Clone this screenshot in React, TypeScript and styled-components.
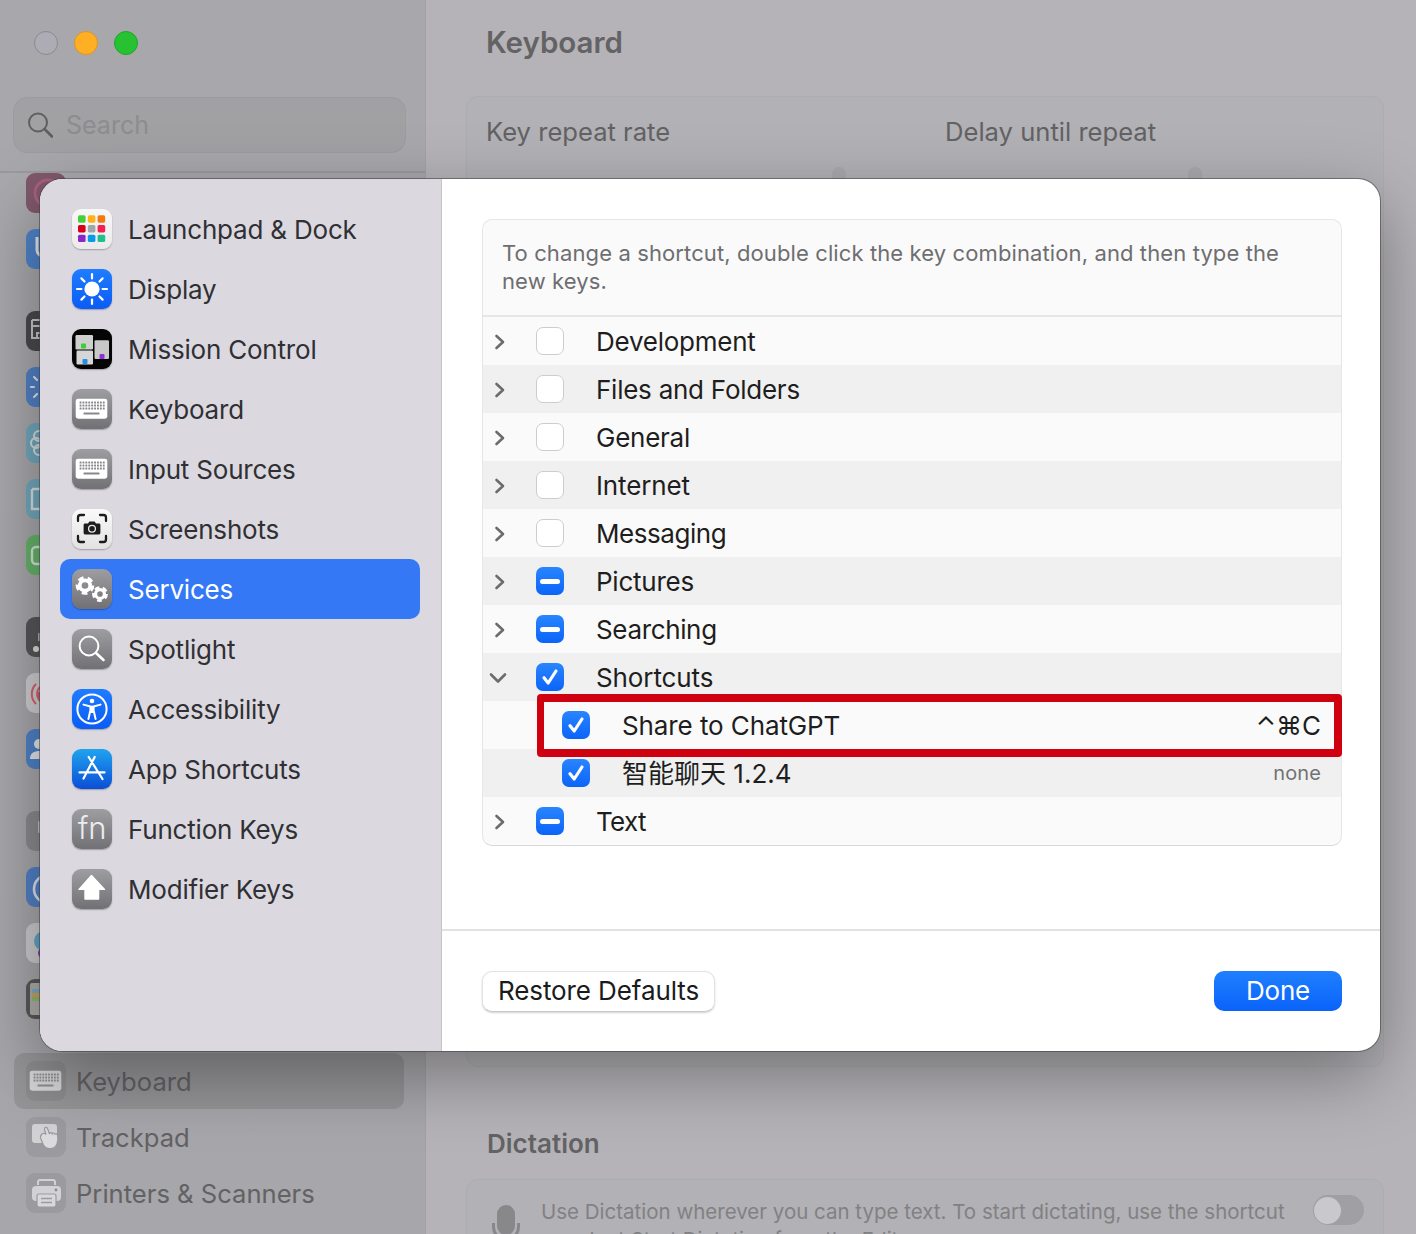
import React from "react";
import styled, { createGlobalStyle } from "styled-components";

const Global = createGlobalStyle`
  html, body { margin: 0; padding: 0; background: #b3b2b6; }
  *, *::before, *::after { box-sizing: border-box; }
  body { font-family: Inter, "Noto Sans CJK SC", "DejaVu Sans", sans-serif; }
`;

const Page = styled.div`
  position: relative;
  display: flex;
  width: 1416px;
  height: 1234px;
  overflow: hidden;
`;

/* ---------- window behind the sheet ---------- */
const BackSidebar = styled.aside`
  width: 426px;
  flex: none;
  display: flex;
  flex-direction: column;
  background: linear-gradient(180deg, #a9a8ac 0%, #a7a6aa 100%);
  border-right: 1px solid #a2a1a5;
`;
const BackHeader = styled.div`
  height: 173px;
  flex: none;
  padding: 31px 20px 0 13px;
  border-bottom: 2px solid #9a999d;
  background: #a8a7ab;
`;
const Lights = styled.div`
  display: flex;
  gap: 16px;
  padding-left: 21px;
`;
const Light = styled.span<{ $c: string; $b: string }>`
  width: 24px;
  height: 24px;
  border-radius: 50%;
  background: ${(p) => p.$c};
  border: 1px solid ${(p) => p.$b};
`;
const SearchField = styled.div`
  margin-top: 42px;
  width: 393px;
  height: 56px;
  display: flex;
  align-items: center;
  gap: 13px;
  padding-left: 13px;
  border-radius: 14px;
  background: #a1a0a3;
  border: 1px solid #9c9b9f;
  font-size: 25px;
  color: #8d8c8f;
`;
const BackList = styled.div`
  display: flex;
  flex-direction: column;
  margin-top: -8px;
  padding: 0 21px 0 14px;
`;
const BackRow = styled.div<{ $gap?: boolean; $selected?: boolean }>`
  height: 56px;
  flex: none;
  display: flex;
  align-items: center;
  gap: 10px;
  padding-left: 12px;
  margin-top: ${(p) => (p.$gap ? "26px" : "0")};
  border-radius: 10px;
  font-size: 25.6px;
  color: #626264;
  background: ${(p) => (p.$selected ? "rgba(70,70,74,.18)" : "transparent")};
`;
const BackTile = styled.div<{ $bg: string }>`
  width: 40px;
  height: 40px;
  flex: none;
  border-radius: 9px;
  background: ${(p) => p.$bg};
  display: flex;
  overflow: hidden;
`;
const BackMain = styled.main`
  flex: 1;
  min-width: 0;
  display: flex;
  flex-direction: column;
  padding: 0 32px 0 40px;
  background: #b5b3b7;
`;
const BackTitle = styled.h1`
  margin: 0;
  height: 96px;
  flex: none;
  padding: 24px 0 0 20px;
  font-size: 29.5px;
  line-height: 36px;
  font-weight: 600;
  color: #636365;
`;
const BackCard = styled.section<{ $h: number }>`
  height: ${(p) => p.$h}px;
  flex: none;
  border: 1px solid #adacb0;
  border-radius: 12px;
  background: #b2b1b5;
  display: flex;
  position: relative;
`;
const RepeatLabel = styled.div<{ $w: number }>`
  width: ${(p) => p.$w}px;
  padding: 19px 0 0 19px;
  font-size: 25.6px;
  line-height: 32px;
  color: #626264;
`;
const Thumb = styled.span<{ $x: number }>`
  position: absolute;
  left: ${(p) => p.$x}px;
  top: 70px;
  width: 14px;
  height: 30px;
  border-radius: 7px;
  background: #a9a8ac;
`;
const SectionTitle = styled.h2`
  margin: 0;
  height: 112px;
  flex: none;
  padding: 60px 0 0 21px;
  font-size: 26px;
  line-height: 34px;
  font-weight: 600;
  color: #636365;
`;
const DictationBody = styled.div`
  display: flex;
  flex: 1;
  min-width: 0;
  align-items: flex-start;
  padding: 15px 19px 0 25px;
`;
const MicSlot = styled.div`
  flex: none;
  margin-top: 10px;
`;
const DictationText = styled.p`
  margin: 3px 20px 0 21px;
  flex: 1;
  min-width: 0;
  font-size: 20.5px;
  line-height: 28px;
  color: #818184;
  white-space: nowrap;
`;
const Toggle = styled.span`
  width: 51px;
  height: 30px;
  flex: none;
  border-radius: 15px;
  background: #a09fa3;
  display: flex;
  align-items: center;
  padding-left: 1px;
  &::before {
    content: "";
    width: 27px;
    height: 27px;
    border-radius: 50%;
    background: #c9c8cb;
  }
`;

/* ---------- sheet ---------- */
const Sheet = styled.div`
  position: absolute;
  left: 40px;
  top: 179px;
  width: 1340px;
  height: 872px;
  display: flex;
  border-radius: 22px;
  overflow: hidden;
  background: #fff;
  box-shadow: 0 0 0 1px rgba(60, 60, 64, 0.55), 0 24px 70px rgba(0, 0, 0, 0.36);
`;
const SheetNav = styled.nav`
  width: 402px;
  flex: none;
  display: flex;
  flex-direction: column;
  padding: 20px 21px 0 20px;
  background: #dbd9df;
  border-right: 1px solid #c6c5ca;
`;
const NavItem = styled.div<{ $active?: boolean }>`
  height: 60px;
  flex: none;
  display: flex;
  align-items: center;
  gap: 16px;
  padding-left: 12px;
  border-radius: 10px;
  font-size: 26px;
  letter-spacing: -0.2px;
  color: ${(p) => (p.$active ? "#fff" : "#303034")};
  background: ${(p) => (p.$active ? "#3478f6" : "transparent")};
`;
const Tile = styled.div<{ $bg: string }>`
  width: 40px;
  height: 40px;
  flex: none;
  border-radius: 9px;
  background: ${(p) => p.$bg};
  box-shadow: 0 1px 1.5px rgba(0, 0, 0, 0.28);
  display: flex;
  align-items: center;
  justify-content: center;
  overflow: hidden;
`;
const FnGlyph = styled.span`
  font-size: 31px;
  font-weight: 300;
  line-height: 40px;
  color: #ececee;
  margin-top: -2px;
`;
const SheetMain = styled.div`
  flex: 1;
  min-width: 0;
  display: flex;
  flex-direction: column;
`;
const PanelArea = styled.div`
  height: 752px;
  flex: none;
  padding: 40px 38px 0 40px;
  border-bottom: 2px solid #e2e2e2;
`;
const Panel = styled.div`
  height: 627px;
  border: 1px solid #e6e6e6;
  border-bottom-color: #d9d9d9;
  border-radius: 10px;
  background: #fafafa;
`;
const PanelNote = styled.p`
  margin: 0;
  height: 97px;
  padding: 19px 19px 0 19px;
  font-size: 22px;
  line-height: 28px;
  letter-spacing: 0.11px;
  color: #6e6e70;
  border-bottom: 2px solid #e6e6e6;
`;
const Rows = styled.div`
  display: flex;
  flex-direction: column;
`;
const Row = styled.div<{ $outlined?: boolean }>`
  position: relative;
  z-index: ${(p) => (p.$outlined ? 1 : 0)};
  height: 48px;
  flex: none;
  display: flex;
  align-items: center;
  padding-right: 20px;
  font-size: 26px;
  color: #1e1e20;
  &:nth-child(even) {
    background: #f0f0f0;
  }
  &:last-child {
    border-radius: 0 0 9px 9px;
  }
  ${(p) =>
    p.$outlined
      ? `&::after {
          content: "";
          position: absolute;
          left: 54px;
          right: -1px;
          top: -7px;
          height: 63px;
          border: 8px solid #cf0010;
          border-left-width: 7px;
          border-radius: 4px;
          pointer-events: none;
        }`
      : ""}
`;
const ChevronSlot = styled.div<{ $child?: boolean }>`
  width: ${(p) => (p.$child ? "79px" : "53px")};
  flex: none;
  display: flex;
  padding: 2px 0 0 11px;
`;
const Box = styled.span<{ $state: "off" | "mixed" | "on" }>`
  width: 28px;
  height: 28px;
  flex: none;
  display: flex;
  align-items: center;
  justify-content: center;
  border-radius: 7px;
  background: ${(p) =>
    p.$state === "off" ? "#fff" : "linear-gradient(180deg, #2a85ff, #0b64f9)"};
  border: ${(p) => (p.$state === "off" ? "1px solid #cdcdcd" : "none")};
`;
const MixedBar = styled.span`
  width: 20px;
  height: 5px;
  border-radius: 2.5px;
  background: #fff;
`;
const RowLabel = styled.span<{ $ls: number }>`
  margin-left: 32px;
  padding-top: 2px;
  line-height: 32px;
  letter-spacing: ${(p) => p.$ls}px;
`;
const Shortcut = styled.span<{ $muted?: boolean }>`
  margin-left: auto;
  font-size: ${(p) => (p.$muted ? "20px" : "26px")};
  letter-spacing: ${(p) => (p.$muted ? "0.1px" : "0")};
  color: ${(p) => (p.$muted ? "#727274" : "#1e1e20")};
`;
const Footer = styled.div`
  flex: 1;
  display: flex;
  align-items: center;
  justify-content: space-between;
  padding: 0 38px 0 40px;
`;
const RestoreButton = styled.button`
  height: 41px;
  width: 233px;
  padding: 0 0 2px;
  border: 1px solid #e3e3e3;
  border-bottom-color: #c9c9c9;
  border-radius: 10px;
  background: #fff;
  box-shadow: 0 1px 2px rgba(0, 0, 0, 0.18);
  font: inherit;
  font-size: 26px;
  letter-spacing: -0.1px;
  color: #1b1b1d;
`;
const DoneButton = styled.button`
  height: 40px;
  width: 128px;
  padding: 0 0 2px;
  border: none;
  border-radius: 10px;
  background: linear-gradient(180deg, #1f7fff, #0a63fa);
  font: inherit;
  font-size: 26px;
  letter-spacing: -0.25px;
  color: #fff;
`;

/* ---------- icons ---------- */
const Svg: React.FC<{ children: React.ReactNode }> = ({ children }) => (
  <svg width={40} height={40} viewBox="0 0 40 40" fill="none">
    {children}
  </svg>
);

const LaunchIcon = () => {
  const c = ["#45cf3a", "#ffb21a", "#f5780f", "#d9001b", "#9fa8a8", "#f5204f", "#8d26c9", "#0a9ae8", "#1fbf8f"];
  return (
    <Svg>
      {c.map((f, i) => (
        <rect key={f} x={6 + (i % 3) * 9.8} y={6.3 + Math.floor(i / 3) * 9.7} width="7.6" height="7.4" rx="1.6" fill={f} />
      ))}
    </Svg>
  );
};

const SunIcon = () => (
  <Svg>
    <circle cx="20" cy="20" r="7.6" fill="#fff" />
    {[0, 45, 90, 135, 180, 225, 270, 315].map((a) => (
      <line key={a} x1="20" y1="5" x2="20" y2="9.4" stroke="#fff" strokeWidth="2.2" strokeLinecap="round" transform={`rotate(${a} 20 20)`} />
    ))}
  </Svg>
);

const MissionIcon = () => (
  <Svg>
    <rect x="3.5" y="6" width="17.5" height="14.5" rx="1.2" fill="#cfcfcf" />
    <rect x="4.5" y="21.5" width="16.5" height="14" rx="1.2" fill="#d6d6d6" />
    <rect x="22.5" y="11.3" width="14.5" height="18.7" rx="1.2" fill="#c8c8c8" />
    <rect x="9" y="14.5" width="5" height="5" rx="1" fill="#3ccf3a" />
    <rect x="10.5" y="30" width="5" height="5" rx="1" fill="#1e90f0" />
    <rect x="27.5" y="25" width="5" height="5" rx="1" fill="#9030d8" />
  </Svg>
);

const KeyboardIcon: React.FC<{ dot?: string; body?: string }> = ({ dot = "#88888c", body = "#fff" }) => {
  const dots: React.ReactNode[] = [];
  for (let r = 0; r < 3; r++) {
    for (let c = 0; c < 9; c++) {
      dots.push(<rect key={`${r}-${c}`} x={7.6 + c * 2.9} y={12.6 + r * 3} width="1.9" height="2" rx=".3" fill={dot} />);
    }
  }
  return (
    <Svg>
      <rect x="3.7" y="9.7" width="31.6" height="20" rx="2.4" fill={body} />
      {dots}
      <rect x="11.5" y="23.6" width="16" height="2" rx=".6" fill={dot} />
    </Svg>
  );
};

const ScreenshotIcon = () => (
  <Svg>
    <path d="M6 12V8.5A2.5 2.5 0 0 1 8.5 6H12M28 6h3.5A2.5 2.5 0 0 1 34 8.5V12M34 27v3.5a2.5 2.5 0 0 1-2.5 2.5H28M12 33H8.5A2.5 2.5 0 0 1 6 30.5V27" stroke="#1c1c1e" strokeWidth="2.3" strokeLinecap="round" />
    <path d="M13 14.5h3l1.4-2h5.2l1.4 2h3a1.4 1.4 0 0 1 1.4 1.4v8.2a1.4 1.4 0 0 1-1.4 1.4H13a1.4 1.4 0 0 1-1.4-1.4v-8.2a1.4 1.4 0 0 1 1.4-1.4z" fill="#1c1c1e" />
    <circle cx="20" cy="19.8" r="3.4" fill="none" stroke="#e8e8e8" strokeWidth="1.3" />
  </Svg>
);

const Gear: React.FC<{ x: number; y: number; r: number }> = ({ x, y, r }) => (
  <g>
    <circle cx={x} cy={y} r={r * 0.58} stroke="#fff" strokeWidth={r * 0.42} fill="none" />
    <circle cx={x} cy={y} r={r * 0.86} stroke="#fff" strokeWidth={r * 0.36} fill="none" strokeDasharray={`${r * 0.62} ${r * 0.46}`} />
  </g>
);

const ServicesIcon = () => (
  <Svg>
    <Gear x={13} y={16.5} r={9} />
    <Gear x={28} y={25} r={7.6} />
  </Svg>
);

const SpotlightIcon = () => (
  <Svg>
    <circle cx="17" cy="17" r="9.4" stroke="#fff" strokeWidth="2" />
    <line x1="24" y1="24" x2="31.5" y2="31" stroke="#fff" strokeWidth="2.6" strokeLinecap="round" />
  </Svg>
);

const AccessIcon = () => (
  <Svg>
    <circle cx="20" cy="20" r="14.6" stroke="#fff" strokeWidth="2" />
    <circle cx="20" cy="12" r="2.3" fill="#fff" />
    <rect x="17.4" y="16.6" width="5.2" height="7.4" fill="#fff" />
    <path d="M11.5 15.6 17.5 17.3M28.5 15.6 22.5 17.3M18 23l-1.6 7M22 23l1.6 7" stroke="#fff" strokeWidth="2" strokeLinecap="round" />
  </Svg>
);

const AppIcon = () => (
  <Svg>
    <path d="M16.7 8 30.5 30M22.7 8 11.5 29.5M7.5 23.4h25" stroke="#fff" strokeWidth="2.2" strokeLinecap="round" />
  </Svg>
);

const ArrowIcon = () => (
  <Svg>
    <path d="M19.5 6.5 32.5 20.4H26.6V30H13V20.4H7z" fill="#fff" stroke="#fff" strokeWidth="1.4" strokeLinejoin="round" />
  </Svg>
);

const GREY = "linear-gradient(180deg, #9e9ea2, #717175)";

const navItems: { label: string; bg: string; icon: React.ReactNode; active?: boolean }[] = [
  { label: "Launchpad & Dock", bg: "linear-gradient(180deg,#f7f7f7,#ebebeb)", icon: <LaunchIcon /> },
  { label: "Display", bg: "linear-gradient(180deg,#1f7cff,#0a5cf5)", icon: <SunIcon /> },
  { label: "Mission Control", bg: "#050505", icon: <MissionIcon /> },
  { label: "Keyboard", bg: GREY, icon: <KeyboardIcon /> },
  { label: "Input Sources", bg: GREY, icon: <KeyboardIcon /> },
  { label: "Screenshots", bg: "linear-gradient(180deg,#fafafa,#e2e2e2)", icon: <ScreenshotIcon /> },
  { label: "Services", bg: GREY, icon: <ServicesIcon />, active: true },
  { label: "Spotlight", bg: GREY, icon: <SpotlightIcon /> },
  { label: "Accessibility", bg: "linear-gradient(180deg,#1f7cff,#0a5cf5)", icon: <AccessIcon /> },
  { label: "App Shortcuts", bg: "linear-gradient(180deg,#1fa3ef,#0b4ed6)", icon: <AppIcon /> },
  { label: "Function Keys", bg: GREY, icon: <FnGlyph>fn</FnGlyph> },
  { label: "Modifier Keys", bg: GREY, icon: <ArrowIcon /> },
];

const Chevron: React.FC<{ open?: boolean }> = ({ open }) =>
  open ? (
    <svg width="18" height="12" viewBox="0 0 18 12" fill="none" style={{ marginLeft: -5 }}>
      <path d="M2 2.5 9 9.5 16 2.5" stroke="#6c6c6e" strokeWidth="2.6" strokeLinecap="round" strokeLinejoin="round" />
    </svg>
  ) : (
    <svg width="12" height="16" viewBox="0 0 12 16" fill="none">
      <path d="M2.5 2 9 8 2.5 14" stroke="#6c6c6e" strokeWidth="2.6" strokeLinecap="round" strokeLinejoin="round" />
    </svg>
  );

const Check: React.FC<{ state: "off" | "mixed" | "on" }> = ({ state }) => (
  <Box $state={state}>
    {state === "mixed" && <MixedBar />}
    {state === "on" && (
      <svg width="20" height="20" viewBox="0 0 20 20" fill="none">
        <path d="M4 10.8 8.2 16 16 4" stroke="#fff" strokeWidth="3.2" strokeLinecap="round" strokeLinejoin="round" />
      </svg>
    )}
  </Box>
);

type RowData = {
  label: string;
  state: "off" | "mixed" | "on";
  ls: number;
  open?: boolean;
  child?: boolean;
  outlined?: boolean;
  keys?: string;
  muted?: boolean;
};

const rows: RowData[] = [
  { label: "Development", state: "off", ls: -0.25 },
  { label: "Files and Folders", state: "off", ls: -0.25 },
  { label: "General", state: "off", ls: -0.25 },
  { label: "Internet", state: "off", ls: -0.15 },
  { label: "Messaging", state: "off", ls: -0.45 },
  { label: "Pictures", state: "mixed", ls: -0.25 },
  { label: "Searching", state: "mixed", ls: -0.35 },
  { label: "Shortcuts", state: "on", ls: -0.1, open: true },
  { label: "Share to ChatGPT", state: "on", ls: -0.1, child: true, outlined: true, keys: "⌃⌘C" },
  { label: "智能聊天 1.2.4", state: "on", ls: 0, child: true, keys: "none", muted: true },
  { label: "Text", state: "mixed", ls: -0.7 },
];

const g = (d: React.ReactNode) => <Svg>{d}</Svg>;

const backIcons: { bg: string; gap?: boolean; art?: React.ReactNode }[] = [
  { bg: "#80586c", art: g(<circle cx="22" cy="20" r="13" stroke="#a8607f" strokeWidth="3" />) },
  { bg: "#4f83c8", art: g(<path d="M11 8v13a6 6 0 0 0 6 6" stroke="#e3e3e6" strokeWidth="3" />) },
  { bg: "#4a4a4c", gap: true, art: g(<path d="M6 9h16M6 15h16M6 9v18h14M11 22h4v5h-4z" stroke="#c5c5c7" strokeWidth="2" />) },
  { bg: "#5180c6", art: g(<path d="M5 20h3M8 10l3 3M8 30l3-3" stroke="#dfe2e8" strokeWidth="2.2" strokeLinecap="round" />) },
  { bg: "#71a8bd", art: g(<g stroke="#d5dde0" strokeWidth="2"><circle cx="13" cy="13" r="5" /><circle cx="10" cy="20" r="5" /><circle cx="13" cy="27" r="5" /></g>) },
  { bg: "#71a8bd", art: g(<path d="M6 10h16M6 10v20h16" stroke="#d5dde0" strokeWidth="2.4" />) },
  { bg: "#66b36b", art: g(<rect x="6" y="12" width="24" height="17" rx="4" stroke="#d4e4d4" strokeWidth="2.4" />) },
  { bg: "#575759", gap: true, art: g(<><circle cx="10" cy="32" r="3" fill="#dcdcdd" /><rect x="12" y="16" width="8" height="8" fill="#b0b0b2" /></>) },
  { bg: "#cfcfd1", art: g(<path d="M14 14a10 10 0 0 0 0 14M10 11a14 14 0 0 0 0 20M13 19v6" stroke="#d8616f" strokeWidth="2" />) },
  { bg: "#4f83c8", art: g(<><circle cx="13" cy="15" r="5" fill="#e3e6ea" /><path d="M4 30c0-6 4-8 10-8v8z" fill="#e3e6ea" /></>) },
  { bg: "#8b8b8d", gap: true, art: g(<rect x="12" y="10" width="6" height="12" rx="1" fill="#c4c4c5" />) },
  { bg: "#5180c6", art: g(<circle cx="22" cy="22" r="14" stroke="#dce1e8" strokeWidth="2.6" />) },
  { bg: "#cbcbcd", art: g(<><circle cx="18" cy="18" r="10" fill="#62a3c6" /><circle cx="18" cy="30" r="6" fill="#7c3ac4" /></>) },
  { bg: "#59595b", art: g(<><rect x="4" y="4" width="34" height="32" rx="2" fill="#aeada8" /><rect x="6" y="10" width="20" height="4" fill="#7ba9c9" /><rect x="6" y="14" width="20" height="4" fill="#c9a35a" /><rect x="6" y="18" width="20" height="4" fill="#8fb56f" /></>) },
];

const TrackpadArt = () => (
  <Svg>
    <rect x="6" y="7" width="25" height="19" rx="3" fill="#d2d2d4" />
    <path d="M16 17c1.4-1.4 3-.5 4 .5l-1.5-5c-.5-2 2-3 3-1l2 5.5c0-1.5 2.2-2 2.8-.2.5-1.2 2.3-1 2.7.4.8-.8 2.2-.3 2.5 1 .8 3 .5 6-.5 8.5-1.2 3-3.5 5-7 5-3 0-5-1.2-6.5-3.5L15 22c-.8-1.5-.5-3.5 1-5z" fill="#dcdcde" stroke="#9b9a9e" strokeWidth="1.2" />
  </Svg>
);

const PrinterArt = () => (
  <Svg>
    <path d="M12 12V8.5A2 2 0 0 1 14 7h13a2 2 0 0 1 2 1.5V12" stroke="#d2d2d4" strokeWidth="2" />
    <rect x="6" y="13" width="29" height="15" rx="4" fill="#d2d2d4" />
    <circle cx="30" cy="17" r="1.4" fill="#8a8a8c" />
    <rect x="11" y="21" width="19" height="13" rx="2" fill="#d8d8da" stroke="#9b9a9e" strokeWidth="1.2" />
    <path d="M15 25.5h11M15 29.5h11" stroke="#9b9a9e" strokeWidth="1.4" />
  </Svg>
);

const SearchGlyph = () => (
  <svg width="26" height="28" viewBox="0 0 26 28" fill="none">
    <circle cx="11" cy="11.5" r="9" stroke="#5f5f61" strokeWidth="2" />
    <line x1="17.5" y1="18" x2="25" y2="25.5" stroke="#5f5f61" strokeWidth="2.6" strokeLinecap="round" />
  </svg>
);

const MicGlyph = () => (
  <svg width="28" height="40" viewBox="0 0 28 40" fill="none">
    <rect x="5" y="0" width="18" height="30" rx="9" fill="#88888a" />
    <path d="M1.5 18v4c0 7 5.5 12 12.5 12s12.5-5 12.5-12v-4M14 34v6" stroke="#88888a" strokeWidth="3" />
  </svg>
);

export default function App() {
  return (
    <Page>
      <Global />
      <BackSidebar>
        <BackHeader>
          <Lights>
            <Light $c="#adacb5" $b="#8a8990" />
            <Light $c="#ffaf24" $b="#dc9620" />
            <Light $c="#27c231" $b="#1fa52a" />
          </Lights>
          <SearchField>
            <SearchGlyph />
            Search
          </SearchField>
        </BackHeader>
        <BackList>
          {backIcons.map((b, i) => (
            <BackRow key={i} $gap={b.gap}>
              <BackTile $bg={b.bg}>{b.art}</BackTile>
            </BackRow>
          ))}
          <BackRow $gap $selected>
            <BackTile $bg="#8c8b8e">
              <KeyboardIcon dot="#8d8c90" body="#d5d5d7" />
            </BackTile>
            Keyboard
          </BackRow>
          <BackRow>
            <BackTile $bg="#9b9a9e">
              <TrackpadArt />
            </BackTile>
            Trackpad
          </BackRow>
          <BackRow>
            <BackTile $bg="#9b9a9e">
              <PrinterArt />
            </BackTile>
            Printers &amp; Scanners
          </BackRow>
        </BackList>
      </BackSidebar>
      <BackMain>
        <BackTitle>Keyboard</BackTitle>
        <BackCard $h={971}>
          <RepeatLabel $w={459}>Key repeat rate</RepeatLabel>
          <RepeatLabel $w={400}>Delay until repeat</RepeatLabel>
          <Thumb $x={365} />
          <Thumb $x={721} />
        </BackCard>
        <SectionTitle>Dictation</SectionTitle>
        <BackCard $h={120}>
          <DictationBody>
            <MicSlot>
              <MicGlyph />
            </MicSlot>
            <DictationText>
              Use Dictation wherever you can type text. To start dictating, use the shortcut
              <br />
              or select Start Dictation from the Edit menu.
            </DictationText>
            <Toggle />
          </DictationBody>
        </BackCard>
      </BackMain>

      <Sheet>
        <SheetNav>
          {navItems.map((n) => (
            <NavItem key={n.label} $active={n.active}>
              <Tile $bg={n.bg}>{n.icon}</Tile>
              {n.label}
            </NavItem>
          ))}
        </SheetNav>
        <SheetMain>
          <PanelArea>
            <Panel>
              <PanelNote>
                To change a shortcut, double click the key combination, and then type the new keys.
              </PanelNote>
              <Rows>
                {rows.map((r) => (
                  <Row key={r.label} $outlined={r.outlined}>
                    <ChevronSlot $child={r.child}>{!r.child && <Chevron open={r.open} />}</ChevronSlot>
                    <Check state={r.state} />
                    <RowLabel $ls={r.ls}>{r.label}</RowLabel>
                    {r.keys && <Shortcut $muted={r.muted}>{r.keys}</Shortcut>}
                  </Row>
                ))}
              </Rows>
            </Panel>
          </PanelArea>
          <Footer>
            <RestoreButton>Restore Defaults</RestoreButton>
            <DoneButton>Done</DoneButton>
          </Footer>
        </SheetMain>
      </Sheet>
    </Page>
  );
}
